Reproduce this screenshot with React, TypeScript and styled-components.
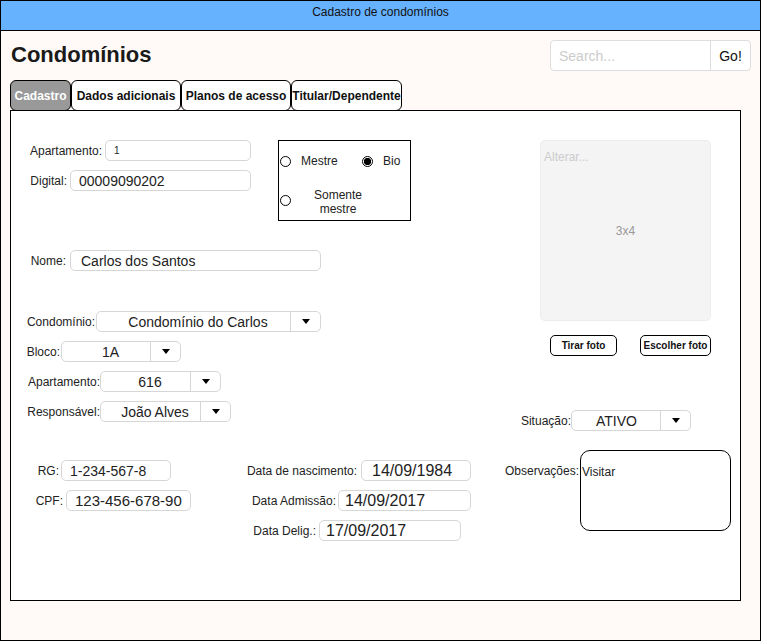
import React from 'react';
import styled, { createGlobalStyle } from 'styled-components';

const Global = createGlobalStyle`
  html, body { margin: 0; padding: 0; background: #fff; }
  body { font-family: "Liberation Sans", Arial, sans-serif; }
  * { box-sizing: border-box; }
`;

const Frame = styled.div`
  width: 761px;
  height: 641px;
  border: 1px solid #000;
  background: #fffaf7;
  display: flex;
  flex-direction: column;
  font-family: "Liberation Sans", Arial, sans-serif;
  color: #222;
`;

const TopBar = styled.header`
  height: 30px;
  flex: none;
  background: #66b2ff;
  border-bottom: 1px solid #000;
  padding-top: 4px;
  text-align: center;
  font-size: 12px;
  line-height: 14px;
  color: #111;
`;

const HeaderRow = styled.div`
  display: flex;
  justify-content: space-between;
  align-items: flex-start;
  padding: 9px 9px 0 10px;
`;

const Heading = styled.h1`
  margin: 3px 0 0 0;
  font-size: 22px;
  line-height: 24px;
  font-weight: bold;
  color: #1a1a1a;
`;

const Search = styled.div`
  width: 201px;
  height: 31px;
  display: flex;
  border: 1px solid #ddd;
  border-radius: 4px;
  background: #fff;
  font-size: 14px;
`;

const SearchInput = styled.div`
  flex: 1;
  display: flex;
  align-items: center;
  padding-left: 8px;
  color: #ccc;
`;

const SearchButton = styled.div`
  width: 40px;
  border-left: 1px solid #ddd;
  display: flex;
  align-items: center;
  justify-content: center;
  color: #111;
`;

const TabBar = styled.nav`
  display: flex;
  margin-top: 9px;
  padding-left: 9px;
`;

const Tab = styled.div<{ $w: number; $active?: boolean }>`
  width: ${(p) => p.$w}px;
  height: 31px;
  border: 1px solid #000;
  border-radius: 6px;
  background: ${(p) => (p.$active ? '#999' : '#fff')};
  color: ${(p) => (p.$active ? '#fff' : '#111')};
  font-size: 12px;
  font-weight: bold;
  display: flex;
  align-items: center;
  justify-content: center;
  white-space: nowrap;
`;

const Panel = styled.main`
  margin: -1px 0 0 9px;
  width: 731px;
  height: 491px;
  border: 1px solid #000;
  background: #fff;
  padding-top: 29px;
  display: flex;
  flex-direction: column;
`;

const Upper = styled.div`
  display: flex;
  align-items: flex-start;
`;

const LeftCol = styled.div`
  width: 500px;
  display: flex;
  flex-direction: column;
`;

const RightCol = styled.div`
  display: flex;
  flex-direction: column;
`;

const TopRow = styled.div`
  display: flex;
  align-items: flex-start;
`;

const Stack = styled.div<{ $mt?: number; $w?: number; $pt?: number }>`
  display: flex;
  flex-direction: column;
  gap: 9px;
  margin-top: ${(p) => p.$mt ?? 0}px;
  padding-top: ${(p) => p.$pt ?? 0}px;
  ${(p) => (p.$w ? `width: ${p.$w}px; flex: none;` : '')}
`;

const FieldRow = styled.div<{ $mt?: number; $align?: string }>`
  display: flex;
  align-items: ${(p) => p.$align ?? 'center'};
  margin-top: ${(p) => p.$mt ?? 0}px;
`;

const Label = styled.span<{ $w: number; $pr?: number; $pt?: number }>`
  width: ${(p) => p.$w}px;
  flex: none;
  text-align: right;
  padding-right: ${(p) => p.$pr ?? 3}px;
  padding-top: ${(p) => p.$pt ?? 0}px;
  font-size: 12px;
  line-height: 14px;
  white-space: nowrap;
  color: #222;
`;

const TextBox = styled.div<{ $w: number; $fs?: number; $pl?: number }>`
  width: ${(p) => p.$w}px;
  height: 21px;
  flex: none;
  border: 1px solid #d6d6d6;
  border-radius: 5px;
  background: #fff;
  font-size: ${(p) => p.$fs ?? 14}px;
  padding-left: ${(p) => p.$pl ?? 8}px;
  display: flex;
  align-items: center;
  white-space: nowrap;
  overflow: hidden;
  color: #222;
`;

const Select = styled.div<{ $w: number }>`
  width: ${(p) => p.$w}px;
  height: 21px;
  flex: none;
  border: 1px solid #d6d6d6;
  border-radius: 5px;
  background: #fff;
  display: flex;
`;

const SelectValue = styled.div<{ $pl?: number }>`
  flex: 1;
  display: flex;
  align-items: center;
  justify-content: center;
  padding-left: ${(p) => p.$pl ?? 9}px;
  font-size: 14px;
  white-space: nowrap;
  color: #222;
`;

const SelectArrow = styled.div`
  width: 30px;
  flex: none;
  border-left: 1px solid #d6d6d6;
  display: flex;
  align-items: center;
  justify-content: center;
`;

const Caret = styled.span`
  width: 0;
  height: 0;
  border-left: 4.5px solid transparent;
  border-right: 4.5px solid transparent;
  border-top: 5px solid #000;
`;

const RadioBox = styled.div`
  width: 133px;
  height: 81px;
  margin-left: 27px;
  border: 1px solid #000;
  background: #fff;
  padding: 13px 0 0 0;
  display: flex;
  flex-direction: column;
`;

const RadioRow = styled.div<{ $mt?: number }>`
  display: flex;
  align-items: flex-start;
  margin-top: ${(p) => p.$mt ?? 0}px;
`;

const RadioOption = styled.div<{ $w?: number; $gap?: number }>`
  display: flex;
  align-items: center;
  gap: ${(p) => p.$gap ?? 10}px;
  height: 14px;
  ${(p) => (p.$w ? `width: ${p.$w}px;` : '')}
  font-size: 12px;
  line-height: 14px;
  color: #222;
`;

const RadioDot = styled.span<{ $checked?: boolean; $mt?: number }>`
  width: 11px;
  height: 11px;
  flex: none;
  margin-left: 1px;
  margin-top: ${(p) => p.$mt ?? 0}px;
  border: 1px solid #000;
  border-radius: 50%;
  background: ${(p) =>
    p.$checked ? 'radial-gradient(circle, #000 0 3.4px, #fff 3.9px)' : '#fff'};
`;

const RadioMultiText = styled.span`
  width: 94px;
  text-align: center;
  font-size: 12px;
  line-height: 14px;
  color: #222;
`;

const Photo = styled.div`
  width: 171px;
  height: 181px;
  margin-left: 29px;
  border: 1px solid #ededed;
  border-radius: 5px;
  background: #f4f4f4;
  display: grid;
  font-size: 12px;
  line-height: 14px;
`;

const PhotoHint = styled.span`
  grid-area: 1 / 1;
  align-self: start;
  justify-self: start;
  margin: 9px 0 0 3px;
  color: #ccc;
`;

const PhotoSize = styled.span`
  grid-area: 1 / 1;
  align-self: center;
  justify-self: center;
  color: #999;
`;

const PhotoButtons = styled.div`
  display: flex;
  gap: 23px;
  margin: 14px 0 0 39px;
`;

const SmallButton = styled.div<{ $w: number }>`
  width: ${(p) => p.$w}px;
  height: 21px;
  border: 1px solid #000;
  border-radius: 5px;
  background: #fff;
  font-size: 10px;
  font-weight: bold;
  display: flex;
  align-items: center;
  justify-content: center;
  white-space: nowrap;
  color: #111;
`;

const Lower = styled.div`
  display: flex;
  align-items: flex-start;
  margin-top: 19px;
`;

const NotesBox = styled.div`
  width: 151px;
  height: 81px;
  border: 1px solid #000;
  border-radius: 10px;
  background: #fff;
  padding: 14px 0 0 1px;
  font-size: 12px;
  line-height: 14px;
  color: #222;
`;

type FieldProps = { label: string; lw: number; pr?: number; mt?: number; children: React.ReactNode };

const Field = ({ label, lw, pr, mt, children }: FieldProps) => (
  <FieldRow $mt={mt}>
    <Label $w={lw} $pr={pr}>{label}</Label>
    {children}
  </FieldRow>
);

type DropProps = { value: string; w: number; pl?: number };

const Dropdown = ({ value, w, pl }: DropProps) => (
  <Select $w={w}>
    <SelectValue $pl={pl}>{value}</SelectValue>
    <SelectArrow>
      <Caret />
    </SelectArrow>
  </Select>
);

const tabs = [
  { name: 'Cadastro', w: 61, active: true },
  { name: 'Dados adicionais', w: 110 },
  { name: 'Planos de acesso', w: 110 },
  { name: 'Titular/Dependente', w: 111 },
];

export default function App() {
  return (
    <>
      <Global />
      <Frame>
        <TopBar>Cadastro de condomínios</TopBar>
        <HeaderRow>
          <Heading>Condomínios</Heading>
          <Search>
            <SearchInput>Search...</SearchInput>
            <SearchButton>Go!</SearchButton>
          </Search>
        </HeaderRow>
        <TabBar>
          {tabs.map((t) => (
            <Tab key={t.name} $w={t.w} $active={t.active}>
              {t.name}
            </Tab>
          ))}
        </TabBar>
        <Panel>
          <Upper>
            <LeftCol>
              <TopRow>
                <Stack>
                  <Field label="Apartamento:" lw={94}>
                    <TextBox $w={146} $fs={10} $pl={8}>1</TextBox>
                  </Field>
                  <Field label="Digital:" lw={59}>
                    <TextBox $w={181}>00009090202</TextBox>
                  </Field>
                </Stack>
                <RadioBox>
                  <RadioRow>
                    <RadioOption $w={82}>
                      <RadioDot />
                      Mestre
                    </RadioOption>
                    <RadioOption>
                      <RadioDot $checked />
                      Bio
                    </RadioOption>
                  </RadioRow>
                  <RadioRow $mt={20}>
                    <RadioDot $mt={7} />
                    <RadioMultiText>
                      Somente
                      <br />
                      mestre
                    </RadioMultiText>
                  </RadioRow>
                </RadioBox>
              </TopRow>
              <Field label="Nome:" lw={59} pr={4} mt={29}>
                <TextBox $w={251} $pl={10}>Carlos dos Santos</TextBox>
              </Field>
              <Stack $mt={40}>
                <Field label="Condomínio:" lw={85} pr={1}>
                  <Dropdown value="Condomínio do Carlos" w={225} />
                </Field>
                <Field label="Bloco:" lw={50} pr={1}>
                  <Dropdown value="1A" w={120} />
                </Field>
                <Field label="Apartamento:" lw={89} pr={0}>
                  <Dropdown value="616" w={121} />
                </Field>
                <Field label="Responsável:" lw={89} pr={0}>
                  <Dropdown value="João Alves" w={131} />
                </Field>
              </Stack>
            </LeftCol>
            <RightCol>
              <Photo>
                <PhotoHint>Alterar...</PhotoHint>
                <PhotoSize>3x4</PhotoSize>
              </Photo>
              <PhotoButtons>
                <SmallButton $w={67}>Tirar foto</SmallButton>
                <SmallButton $w={71}>Escolher foto</SmallButton>
              </PhotoButtons>
              <Field label="Situação:" lw={60} pr={0} mt={54}>
                <Dropdown value="ATIVO" w={120} pl={1} />
              </Field>
            </RightCol>
          </Upper>
          <Lower>
            <Stack $w={190} $pt={10}>
              <Field label="RG:" lw={50} pr={2}>
                <TextBox $w={110}>1-234-567-8</TextBox>
              </Field>
              <Field label="CPF:" lw={55} pr={3}>
                <TextBox $w={125} $fs={15}>123-456-678-90</TextBox>
              </Field>
            </Stack>
            <Stack $w={280} $pt={10}>
              <Field label="Data de nascimento:" lw={160} pr={4}>
                <TextBox $w={110} $fs={16} $pl={10}>14/09/1984</TextBox>
              </Field>
              <Field label="Data Admissão:" lw={137} pr={2}>
                <TextBox $w={133} $fs={16} $pl={6}>14/09/2017</TextBox>
              </Field>
              <Field label="Data Delig.:" lw={118} pr={3}>
                <TextBox $w={142} $fs={16} $pl={6}>17/09/2017</TextBox>
              </Field>
            </Stack>
            <FieldRow $align="flex-start">
              <Label $w={99} $pr={1} $pt={14}>Observações:</Label>
              <NotesBox>Visitar</NotesBox>
            </FieldRow>
          </Lower>
        </Panel>
      </Frame>
    </>
  );
}
